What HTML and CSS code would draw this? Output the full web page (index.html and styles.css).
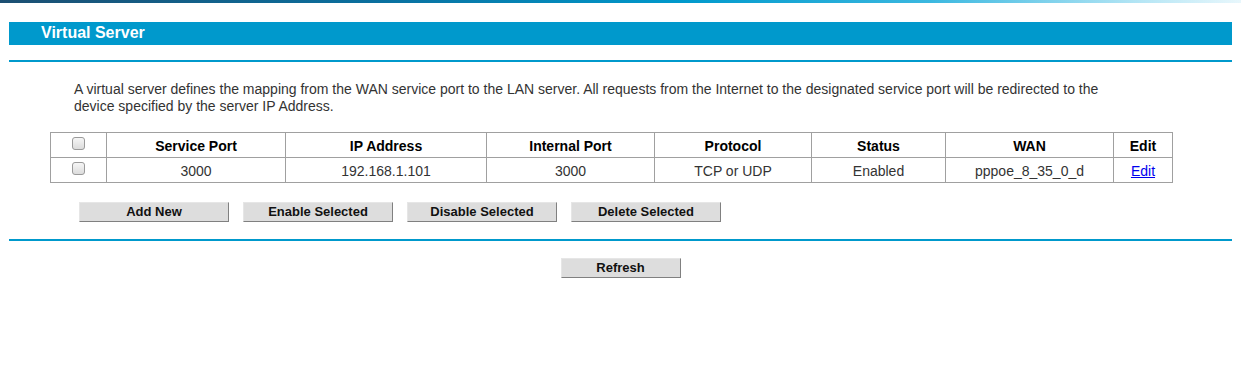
FILE: index.html
```html
<!DOCTYPE html>
<html>
<head>
<meta charset="utf-8">
<link rel="stylesheet" href="styles.css">
</head>
<body>
<div class="topbar"></div>
<div class="page">
  <div class="titlebar">Virtual Server</div>
  <div class="rule rule-top"></div>
  <p class="desc">A virtual server defines the mapping from the WAN service port to the LAN server. All requests from the Internet to the designated service port will be redirected to the device specified by the server IP Address.</p>
  <table class="vs-table">
    <colgroup>
      <col style="width:56px"><col style="width:179px"><col style="width:201px"><col style="width:168px"><col style="width:157px"><col style="width:134px"><col style="width:168px"><col style="width:59px">
    </colgroup>
    <tr class="head">
      <th><span class="cb"></span></th>
      <th>Service Port</th>
      <th>IP Address</th>
      <th>Internal Port</th>
      <th>Protocol</th>
      <th>Status</th>
      <th>WAN</th>
      <th>Edit</th>
    </tr>
    <tr>
      <td><span class="cb"></span></td>
      <td>3000</td>
      <td>192.168.1.101</td>
      <td>3000</td>
      <td>TCP or UDP</td>
      <td>Enabled</td>
      <td>pppoe_8_35_0_d</td>
      <td><a href="#" class="edit">Edit</a></td>
    </tr>
  </table>
  <div class="actions">
    <button class="btn">Add New</button>
    <button class="btn">Enable Selected</button>
    <button class="btn">Disable Selected</button>
    <button class="btn">Delete Selected</button>
  </div>
  <div class="rule rule-bottom"></div>
  <div class="refresh-row">
    <button class="btn btn-refresh">Refresh</button>
  </div>
</div>
</body>
</html>
```

FILE: styles.css
```css
html, body {
  margin: 0;
  padding: 0;
  background: #fff;
  font-family: "Liberation Sans", Arial, sans-serif;
  font-size: 14px;
  color: #333;
}

.topbar {
  height: 3px;
  background: linear-gradient(to right, #1c4f72 0%, #0a6f9e 30%, #0099cc 55%, #3bb8e0 75%, #b6e6f5 92%, #e8f7fc 100%);
}

.page {
  padding: 0 9px;
}

.titlebar {
  margin-top: 19px;
  height: 23px;
  background: #0099cc;
  color: #fff;
  font-weight: bold;
  font-size: 16px;
  line-height: 22px;
  padding-left: 32px;
}

.rule {
  height: 2px;
  background: #0099cc;
}

.rule-top {
  margin-top: 15px;
}

.desc {
  margin: 19px 0 0 65px;
  width: 1060px;
  line-height: 17px;
  font-size: 14px;
  color: #333;
}

.vs-table {
  margin: 17px 0 0 41px;
  border-collapse: collapse;
  table-layout: fixed;
  width: 1123px;
}

.vs-table th,
.vs-table td {
  border: 1px solid #a0a0a0;
  height: 23px;
  padding: 1px 0 0;
  text-align: center;
  vertical-align: middle;
  font-size: 14px;
}

.vs-table th {
  color: #000;
  font-weight: bold;
}

.vs-table td {
  color: #333;
}

.cb {
  display: inline-block;
  width: 11px;
  height: 11px;
  border: 1px solid #9a9a9a;
  border-radius: 3px;
  background: linear-gradient(#f6f6f6, #dcdcdc);
  vertical-align: middle;
  margin-top: -7px;
}

.edit {
  color: #0000ee;
  text-decoration: underline;
}

.actions {
  display: flex;
  gap: 14px;
  margin: 19px 0 0 70px;
}

.btn {
  width: 150px;
  height: 20px;
  padding: 0;
  background: #dddddd;
  border: 1px solid;
  border-color: #e6e6e6 #808080 #808080 #e6e6e6;
  font-family: "Liberation Sans", Arial, sans-serif;
  font-weight: bold;
  font-size: 13px;
  color: #111;
  line-height: 18px;
}

.rule-bottom {
  margin-top: 17px;
}

.refresh-row {
  display: flex;
  justify-content: center;
  margin-top: 17px;
}

.btn-refresh {
  width: 120px;
}
```
